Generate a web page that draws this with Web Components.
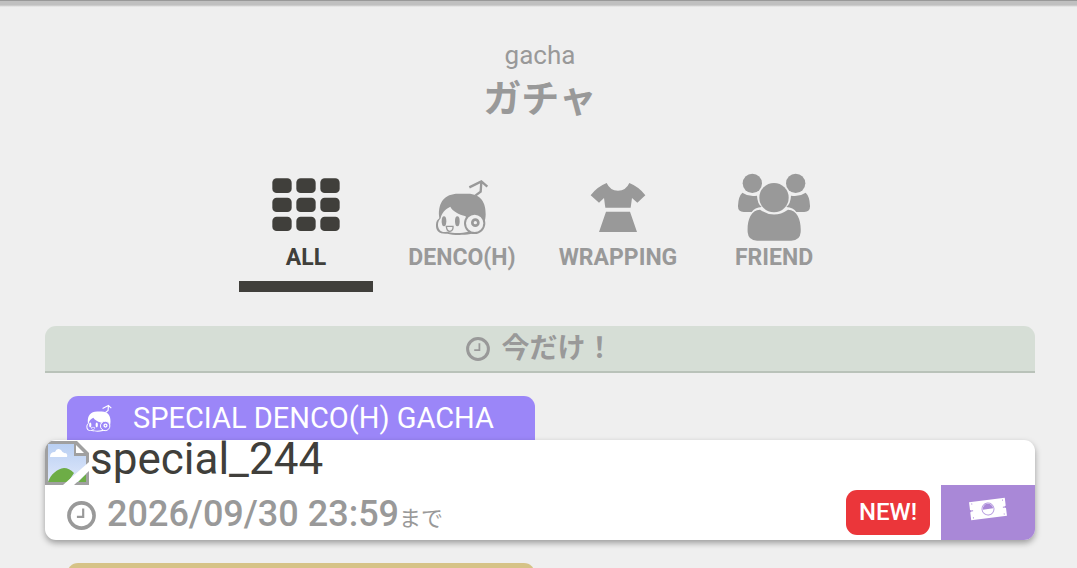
<!DOCTYPE html>
<html lang="ja">
<head>
<meta charset="utf-8">
<title>ガチャ</title>
<style>
html { background: #efefef; scrollbar-width: none; }
body { margin: 0; color: #999; font-family: Roboto, "Noto Sans CJK JP", sans-serif; }
</style>
</head>
<body>
<gacha-page></gacha-page>
<script>
const define = (name, html) => {
  const template = document.createElement('template');
  template.innerHTML = html;
  customElements.define(name, class extends HTMLElement {
    constructor() {
      super();
      this.attachShadow({ mode: 'open' }).append(template.content.cloneNode(true));
    }
  });
};

define('icon-clock', `
<style>:host{display:inline-flex;width:24px;height:24px} svg{width:100%;height:100%}</style>
<svg viewBox="0 0 24 24" fill="none" stroke="currentColor" aria-hidden="true"><circle cx="12" cy="12" r="10.4" stroke-width="3"/><path d="M13.4 6.3v6.9H8.2" stroke-width="1.8"/></svg>`);

define('icon-grid', `
<style>:host{display:block} svg{display:block;width:74px;height:68px}</style>
<svg viewBox="117 24 222 204" fill="currentColor" aria-hidden="true">
<rect x="127" y="40" width="58" height="44" rx="13"/><rect x="199" y="40" width="58" height="44" rx="13"/><rect x="271" y="40" width="58" height="44" rx="13"/>
<rect x="127" y="98" width="58" height="43" rx="13"/><rect x="199" y="98" width="58" height="43" rx="13"/><rect x="271" y="98" width="58" height="43" rx="13"/>
<rect x="127" y="155" width="58" height="43" rx="13"/><rect x="199" y="155" width="58" height="43" rx="13"/><rect x="271" y="155" width="58" height="43" rx="13"/></svg>`);

define('icon-denco', `
<style>:host{display:block;width:74px;height:68px} svg{display:block;width:100%;height:100%}</style>
<svg viewBox="90 24 222 204" aria-hidden="true">
<path d="M132 152C130 112 148 86 190 86H218C258 86 273 114 272 148C272 166 266 186 252 199C232 211 180 213 157 206C134 208 122 198 123 180C123 170 127 164 133 160Z" fill="currentColor"/>
<path d="M166 125C152 131 138 146 137 160C128 168 126 185 134 195C140 202 148 202 156 200C174 205 198 206 220 200L212 154C191 148 173 139 166 125Z" style="fill:var(--hole,#efefef)"/>
<ellipse cx="147" cy="169" rx="7" ry="15" fill="currentColor"/><ellipse cx="187" cy="169" rx="7" ry="15" fill="currentColor"/>
<path d="M154 184H174V189C174 195 168 199 164 199C159 199 155 194 154 184Z" fill="none" stroke="currentColor" stroke-width="4"/>
<circle cx="239" cy="175" r="29" style="fill:var(--hole,#efefef)" stroke="currentColor" stroke-width="6"/>
<circle cx="241" cy="173" r="9" fill="none" stroke="currentColor" stroke-width="8"/>
<path d="M241 92L257 80L259 51M223 67L259 49L277 65" fill="none" stroke="currentColor" stroke-width="7"/></svg>`);

define('icon-dress', `
<style>:host{display:block} svg{display:block;width:74px;height:68px}</style>
<svg viewBox="93 24 222 204" fill="currentColor" aria-hidden="true"><path d="M170 54Q180 77 204 77Q228 77 238 54Q268 66 286 91L262 113L246 99L242 128H166L162 99L147 113L122 91Q140 66 170 54ZM168 140H240L261 201H147Z"/></svg>`);

define('icon-friends', `
<style>:host{display:block} svg{display:block;width:74px;height:68px}</style>
<svg viewBox="66 24 222 204" fill="currentColor" aria-hidden="true">
<circle cx="112" cy="55" r="29"/><circle cx="242" cy="55" r="29"/>
<path d="M82 83Q103 97 126 92Q127 116 140 126Q119 127 110 141H86Q68 141 69 122Q70 94 82 83ZM272 83Q251 97 228 92Q227 116 214 126Q235 127 244 141H268Q286 141 285 122Q284 94 272 83Z"/>
<circle cx="177" cy="98" r="44"/>
<path d="M135 134Q177 163 219 134C249 135 259 168 257 202Q255 227 229 227H126Q100 227 98 202C96 168 106 135 135 134Z"/></svg>`);

define('icon-ticket', `
<style>:host{display:block} svg{display:block;width:40px;height:26px}</style>
<svg viewBox="0 0 40 26" aria-hidden="true"><g transform="rotate(-7 20 13)"><path d="M2 4H38V11.6L36.5 13L38 14.4V22H2V14.4L3.5 13L2 11.6Z" fill="#fff"/><circle cx="20" cy="13" r="6" fill="#fff" stroke="#b79de0"/><path d="M14.8 13A5.2 5.2 0 0 1 25.2 13Z" fill="#a988d7"/><path d="M4 6H5M4 20H5M35 6H36M35 20H36M35 13H37M3 13H5" stroke="#a988d7"/></g></svg>`);

define('missing-image', `
<style>:host{display:block;width:44px;height:45px} svg{display:block;width:100%;height:100%}</style>
<svg viewBox="0 0 44 45" role="img" aria-label="image"><defs><linearGradient id="sky" x2="0" y2="1"><stop stop-color="#b9cff2"/><stop offset="1" stop-color="#dfe8fb"/></linearGradient></defs>
<path d="M0 1H32L44 13V45H0Z" fill="#a0a0a0"/><path d="M3 4H29V16H41V42H3Z" fill="url(#sky)"/>
<path d="M31 5V13H39Z" fill="#fff"/><path d="M5 17Q5 12 10 12Q12 7 16 10Q18 14 21 13Q23 15 22 17Z" fill="#fff"/>
<path d="M3 42C6 34 12 29 19 28Q24 28 29 33L23 42ZM33 42L41 34V42Z" fill="#6dad46"/>
<path d="M18 45L44 22V31L29 45Z" fill="#fff"/></svg>`);

define('page-heading', `
<style>:host{display:block;text-align:center} p,h1{margin:0} p{font-size:26px;line-height:32px} h1{padding-top:4px;font-size:38px;line-height:48px;font-weight:700}</style>
<p><slot name="sub"></slot></p><h1><slot></slot></h1>`);

define('category-tab', `
<style>:host{display:block;width:134px}
a{display:flex;flex-direction:column;align-items:center;gap:3px;padding-bottom:9px;border-bottom:11px solid transparent;color:inherit;text-decoration:none;font-size:23px;line-height:28px;font-weight:700}
:host([current]) a{color:#403f3b;border-color:#403f3b}</style>
<a href="#"><slot name="icon"></slot><span><slot></slot></span></a>`);

define('section-title', `
<style>:host{display:block}
h2{margin:0;display:flex;align-items:center;justify-content:center;gap:11px;background:#d6ded6;border-bottom:2px solid #b9c2b9;border-radius:11px 11px 0 0;font-size:28px;line-height:45px;font-weight:700}</style>
<h2><icon-clock></icon-clock><span><slot></slot></span></h2>`);

define('gacha-banner', `
<style>
:host{display:block;margin-top:23px}
a{display:block;color:inherit;text-decoration:none}
.kind{display:flex;align-items:center;gap:16px;box-sizing:border-box;max-width:468px;height:44px;margin:0 22px;padding-left:14px;border-radius:11px 11px 0 0;background:var(--kind);color:#fff;font-size:29px;line-height:44px;white-space:nowrap}
icon-denco{width:36px;height:34px;--hole:var(--kind)}
.card{overflow:hidden;border-radius:11px;background:#fff;box-shadow:0 3px 6px rgba(0,0,0,.35)}
.image{display:flex;height:45px;color:#403f3b;font-size:44px;line-height:38px;gap:1px}
.info{display:flex;align-items:center;height:55px;padding-left:22px}
.info icon-clock{width:29px;height:29px;margin-top:5px}
.date{margin-left:11px;font-size:36px;line-height:40px;font-weight:500;padding-top:8px}
small{font-size:22px;font-weight:400}
.new{margin:0 11px 0 auto;width:84px;border-radius:11px;background:#eb363a;color:#fff;font-size:24px;line-height:44px;font-weight:500;text-align:center;height:45px}
.cost{display:flex;align-items:center;justify-content:center;width:94px;height:55px;padding-bottom:7px;box-sizing:border-box;background:#a988d7}
</style>
<a href="#"><div class="kind"><icon-denco></icon-denco><span><slot name="kind"></slot></span></div>
<div class="card"><div class="image"><missing-image></missing-image><span><slot></slot></span></div>
<div class="info"><icon-clock></icon-clock><span class="date"><slot name="until"></slot><small>まで</small></span><span class="new">NEW!</span><span class="cost"><icon-ticket></icon-ticket></span></div></div></a>`);

define('next-banner', `
<style>:host{display:block;margin-top:23px} div{max-width:468px;height:44px;margin:0 22px;border-radius:11px 11px 0 0;background:#d6c387}</style><div></div>`);

define('gacha-page', `
<style>
:host{display:block}
.top{height:7px;background:linear-gradient(#999 1px,#c0c0c0 1px,#c0c0c0 5px,#efefef 7px)}
main{padding:32px 42px 0 45px}
nav{display:flex;justify-content:center;gap:22px;margin:50px 0 34px}
.first{--kind:#9b86f8}
</style>
<div class="top"></div>
<main>
<page-heading><span slot="sub">gacha</span>ガチャ</page-heading>
<nav>
<category-tab current><icon-grid slot="icon"></icon-grid>ALL</category-tab>
<category-tab><icon-denco slot="icon"></icon-denco>DENCO(H)</category-tab>
<category-tab><icon-dress slot="icon"></icon-dress>WRAPPING</category-tab>
<category-tab><icon-friends slot="icon"></icon-friends>FRIEND</category-tab>
</nav>
<section-title>今だけ！</section-title>
<gacha-banner class="first"><span slot="kind">SPECIAL DENCO(H) GACHA</span>special_244<span slot="until">2026/09/30 23:59</span></gacha-banner>
<next-banner></next-banner>
</main>`);
</script>
</body>
</html>
